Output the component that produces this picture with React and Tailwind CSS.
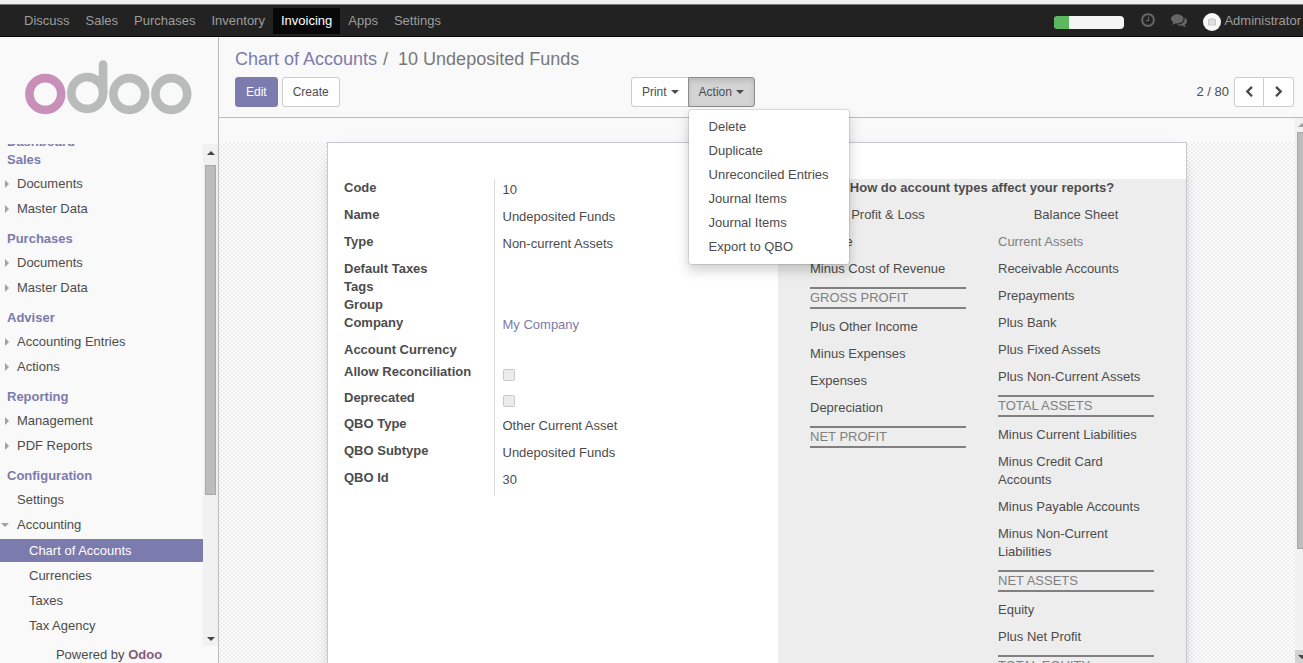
const NAV = ["Discuss", "Sales", "Purchases", "Inventory", "Invoicing", "Apps", "Settings"];

const SECTIONS = [
  { title: "Sales", items: ["Documents", "Master Data"] },
  { title: "Purchases", items: ["Documents", "Master Data"] },
  { title: "Adviser", items: ["Accounting Entries", "Actions"] },
  { title: "Reporting", items: ["Management", "PDF Reports"] },
];

const ACCOUNTING = ["Chart of Accounts", "Currencies", "Taxes", "Tax Agency"];

const ACTIONS = ["Delete", "Duplicate", "Unreconciled Entries", "Journal Items", "Journal Items", "Export to QBO"];

const FIELDS = [
  { label: "Code", value: "10", height: "h-[27px]" },
  { label: "Name", value: "Undeposited Funds", height: "h-[27px]" },
  { label: "Type", value: "Non-current Assets", height: "h-[27px]" },
  { label: "Default Taxes", height: "h-[18px]" },
  { label: "Tags", height: "h-[18px]" },
  { label: "Group", height: "h-[18px]" },
  { label: "Company", value: "My Company", link: true, height: "h-[27px]" },
  { label: "Account Currency", height: "h-[22px]" },
  { label: "Allow Reconciliation", check: "reconcile", height: "h-[26px]" },
  { label: "Deprecated", check: "deprecated", height: "h-[26px]" },
  { label: "QBO Type", value: "Other Current Asset", height: "h-[27px]" },
  { label: "QBO Subtype", value: "Undeposited Funds", height: "h-[27px]" },
  { label: "QBO Id", value: "30", height: "h-[27px]" },
];

const PROFIT = [
  { text: "Income" },
  { text: "Minus Cost of Revenue" },
  { text: "GROSS PROFIT", total: true },
  { text: "Plus Other Income" },
  { text: "Minus Expenses" },
  { text: "Expenses" },
  { text: "Depreciation" },
  { text: "NET PROFIT", total: true },
];

const BALANCE = [
  { text: "Current Assets", muted: true },
  { text: "Receivable Accounts" },
  { text: "Prepayments" },
  { text: "Plus Bank" },
  { text: "Plus Fixed Assets" },
  { text: "Plus Non-Current Assets" },
  { text: "TOTAL ASSETS", total: true },
  { text: "Minus Current Liabilities" },
  { text: "Minus Credit Card Accounts" },
  { text: "Minus Payable Accounts" },
  { text: "Minus Non-Current Liabilities" },
  { text: "NET ASSETS", total: true },
  { text: "Equity" },
  { text: "Plus Net Profit" },
  { text: "TOTAL EQUITY", total: true },
];

function Glyph({ d, className }) {
  return (
    <svg viewBox="0 0 1792 1792" className={className} fill="currentColor" aria-hidden="true">
      <path d={d} />
    </svg>
  );
}

const CLOCK =
  "M1024 544v448q0 14-9 23t-23 9h-320q-14 0-23-9t-9-23v-64q0-14 9-23t23-9h224v-352q0-14 9-23t23-9h64q14 0 23 9t9 23zm416 352q0-148-73-273t-198-198-273-73-273 73-198 198-73 273 73 273 198 198 273 73 273-73 198-198 73-273zm224 0q0 209-103 385.5t-279.5 279.5-385.5 103-385.5-103-279.5-279.5-103-385.5 103-385.5 279.5-279.5 385.5-103 385.5 103 279.5 279.5 103 385.5z";
const COMMENTS =
  "M1408 768q0 139-94 257t-256.5 186.5-353.5 68.5q-86 0-176-16-124 88-278 128-36 9-86 16h-3q-11 0-20.5-8t-11.5-21q-1-3-1-6.5t.5-6.5 2-6l2.5-5 3.5-5.5 4-5 4.5-5 4-4.5q5-6 23-25t26-29.5 22.5-29 25-38.5 20.5-44q-124-72-195-177t-71-224q0-139 94-257t256.5-186.5 353.5-68.5 353.5 68.5 256.5 186.5 94 257zm384 256q0 120-71 224.5t-195 176.5q10 24 20.5 44t25 38.5 22.5 29 26 29.5 23 25q1 1 4 4.5t4.5 5 4 5 3.5 5.5l2.5 5 2 6 .5 6.5-1 6.5q-3 14-13 22t-22 7q-50-7-86-16-154-40-278-128-90 16-176 16-271 0-472-132 58 4 88 4 161 0 309-45t264-129q125-92 192-212t67-254q0-77-23-152 129 71 204 178t75 230z";
const CHEVRON_LEFT =
  "M1427 301l-531 531 531 531q19 19 19 45t-19 45l-166 166q-19 19-45 19t-45-19l-742-742q-19-19-19-45t19-45l742-742q19-19 45-19t45 19l166 166q19 19 19 45t-19 45z";
const CHEVRON_RIGHT =
  "M1363 877l-742 742q-19 19-45 19t-45-19l-166-166q-19-19-19-45t19-45l531-531-531-531q-19-19-19-45t19-45l166-166q19-19 45-19t45 19l742 742q19 19 19 45t-19 45z";

function Logo() {
  return (
    <svg width="168" height="55" viewBox="0 0 168 55" fill="none" strokeWidth="8.6" role="img" aria-label="Odoo">
      <circle cx="21.3" cy="34" r="15.9" stroke="#c88fb9" />
      <g stroke="#b9bbba">
        <circle cx="63.2" cy="33" r="15.9" />
        <path d="M79.1 33V4.5" strokeLinecap="round" />
        <circle cx="105.3" cy="34" r="15.9" />
        <circle cx="147.3" cy="34" r="15.9" />
      </g>
    </svg>
  );
}

function Caret({ className = "h-1 w-2" }) {
  return (
    <svg viewBox="0 0 8 4" className={className} fill="currentColor" aria-hidden="true">
      <path d="M0 0h8L4 4z" />
    </svg>
  );
}

function TopBar() {
  return (
    <header className="border-t-4 border-[#f0efee] bg-[#222]">
      <div className="flex h-[33px] items-center justify-between border-b border-t border-b-[#080808] border-t-[#777]">
        <nav className="flex pl-4">
          {NAV.map((name) => (
            <a
              key={name}
              href="#"
              className={
                name === "Invoicing"
                  ? "bg-[#080808] px-2 py-1 leading-[18px] text-white"
                  : "px-2 py-1 leading-[18px] text-[#9d9d9d]"
              }
            >
              {name}
            </a>
          ))}
        </nav>
        <div className="flex items-center pr-[2px] text-[#9d9d9d]">
          <div className="mr-4 mt-1 h-[13px] w-[70px] overflow-hidden rounded bg-[#f5f5f5]">
            <div className="h-full w-[15px] bg-[#5cb85c]" />
          </div>
          <button type="button" aria-label="Activities" className="mb-[2px] mr-[15px] text-[#666]">
            <Glyph d={CLOCK} className="size-4" />
          </button>
          <button type="button" aria-label="Conversations" className="mb-[2px] mr-4 text-[#666]">
            <Glyph d={COMMENTS} className="size-4" />
          </button>
          <a href="#" className="flex items-center gap-[3px]">
            <svg viewBox="0 0 18 18" className="mt-[2px] size-[18px]" aria-hidden="true">
              <circle cx="9" cy="9" r="9" fill="#f8f8f8" />
              <path d="M5 6.2h2l.8-.9h2.6l.8.9H13v6.3H5z" fill="#ccc" />
              <circle cx="9" cy="9.3" r="2" fill="#d8d8d8" stroke="#f0f0f0" strokeWidth=".9" />
            </svg>
            Administrator
          </a>
        </div>
      </div>
    </header>
  );
}

function MenuItem({ children, marker }) {
  return (
    <li>
      <a href="#" className="flex h-[23px] items-center pl-[5px]">
        <span className="flex w-3 text-[#a0a0a0]">
          {marker === "closed" && (
            <svg viewBox="0 0 4 8" className="h-2 w-1" fill="currentColor" aria-hidden="true">
              <path d="M0 0l4 4-4 4z" />
            </svg>
          )}
          {marker === "open" && <Caret className="-ml-1 h-1 w-2" />}
        </span>
        {children}
      </a>
    </li>
  );
}

function SectionTitle({ children }) {
  return <h2 className="pl-[7px] font-bold leading-[18px] text-[#7c7bad]">{children}</h2>;
}

function Sidebar() {
  return (
    <aside className="flex w-[219px] shrink-0 flex-col border-r border-[#bbb]">
      <a href="#" className="flex h-[107px] shrink-0 justify-center pr-[2px] pt-[23px]">
        <Logo />
      </a>
      <div className="flex min-h-0 flex-1">
        <div className="min-w-0 flex-1 overflow-hidden">
          <div className="-mt-[11px]">
            <SectionTitle>Dashboard</SectionTitle>
            {SECTIONS.map((section) => (
              <section key={section.title} className="mb-[10px]">
                <SectionTitle>{section.title}</SectionTitle>
                <ul className="mt-[3px] flex flex-col gap-[2px]">
                  {section.items.map((item) => (
                    <MenuItem key={item} marker="closed">
                      {item}
                    </MenuItem>
                  ))}
                </ul>
              </section>
            ))}
            <section>
              <SectionTitle>Configuration</SectionTitle>
              <ul className="mt-[3px] flex flex-col gap-[2px]">
                <MenuItem>Settings</MenuItem>
                <MenuItem marker="open">Accounting</MenuItem>
              </ul>
              <ul className="mt-[3px] flex flex-col gap-[2px]">
                {ACCOUNTING.map((item, index) => (
                  <li key={item}>
                    <a
                      href="#"
                      className={
                        index === 0
                          ? "flex h-[23px] items-center bg-[#7c7bad] pl-[29px] text-white"
                          : "flex h-[23px] items-center pl-[29px]"
                      }
                    >
                      {item}
                    </a>
                  </li>
                ))}
              </ul>
            </section>
          </div>
        </div>
        <div className="flex w-[15px] flex-col items-center bg-[#f1f1f1] text-[#444]">
          <div className="flex h-[21px] items-center pb-1">
            <Caret className="h-1 w-2 rotate-180" />
          </div>
          <div className="h-[330px] w-[11px] border border-[#a8a8a8] bg-[#bcbcbc]" />
          <div className="mt-auto flex h-[14px] items-center">
            <Caret />
          </div>
        </div>
      </div>
      <p className="h-[17px] text-center leading-[18px]">
        Powered by <a href="#" className="font-bold text-[#875a7b]">Odoo</a>
      </p>
    </aside>
  );
}

function ControlPanel() {
  return (
    <div className="border-b border-[#bbb] pb-[10px]">
      <h1 className="flex gap-[6px] pl-4 pt-[9px] text-[18px] leading-[26px]">
        <a href="#" className="text-[#7c7bad]">
          Chart of Accounts
        </a>
        <span className="whitespace-pre text-[#777]">/  10 Undeposited Funds</span>
      </h1>
      <div className="mt-[5px] flex text-[12px]">
        <div className="flex w-[38%] gap-1 pl-4">
          <button type="button" className="h-[30px] rounded-[3px] border border-[#7c7bad] bg-[#7c7bad] px-[10px] text-white">
            Edit
          </button>
          <button type="button" className="h-[30px] rounded-[3px] border border-[#ccc] bg-white px-[10px]">
            Create
          </button>
        </div>
        <div className="flex flex-1">
          <button
            type="button"
            className="flex h-[30px] items-center gap-1 rounded-l-[3px] border border-[#ccc] bg-white px-[10px]"
          >
            Print <Caret />
          </button>
          <div className="relative -ml-[2px]">
            <button
              type="button"
              aria-expanded="true"
              className="flex h-[30px] items-center gap-1 rounded-r-[3px] border border-[#8c8c8c] bg-[#d4d4d4] px-[10px] shadow-[inset_0_3px_5px_rgba(0,0,0,0.125)]"
            >
              Action <Caret />
            </button>
            <ul className="absolute left-0 top-8 z-10 whitespace-nowrap rounded border border-black/10 bg-white bg-clip-padding py-[5px] text-[13px] shadow-[0_6px_12px_rgba(0,0,0,0.175)]">
              {ACTIONS.map((item, index) => (
                <li key={index}>
                  <a href="#" className="block px-5 leading-6">
                    {item}
                  </a>
                </li>
              ))}
            </ul>
          </div>
        </div>
        <div className="flex items-center pr-[9px]">
          <span className="pr-[5px] text-[13px]">2 / 80</span>
          <button
            type="button"
            aria-label="Previous"
            className="flex h-[30px] w-[30px] items-center justify-center rounded-l-[3px] border border-[#ccc] bg-white"
          >
            <Glyph d={CHEVRON_LEFT} className="size-3" />
          </button>
          <button
            type="button"
            aria-label="Next"
            className="flex h-[30px] w-[30px] items-center justify-center rounded-r-[3px] border border-l-0 border-[#ccc] bg-white"
          >
            <Glyph d={CHEVRON_RIGHT} className="size-3" />
          </button>
        </div>
      </div>
    </div>
  );
}

function FieldValue({ field }) {
  if (field.check) {
    return (
      <input
        id={field.check}
        type="checkbox"
        disabled
        className="mt-[6px] block size-3 appearance-none rounded-[2px] border border-[#c8c8c8] bg-[#ececec]"
      />
    );
  }
  if (field.link) {
    return (
      <a href="#" className="block pt-[2px] text-[#7c7bad]">
        {field.value}
      </a>
    );
  }
  return field.value ? <span className="block pt-[2px]">{field.value}</span> : null;
}

function ReportColumn({ title, rows }) {
  return (
    <div className="flex w-[188px] flex-col gap-[9px] pl-8">
      <h3 className="text-center">{title}</h3>
      <ul className="flex flex-col gap-[9px]">
        {rows.map((row) => (
          <li
            key={row.text}
            className={row.total ? "border-y-2 border-[#808080] text-[#808080]" : row.muted ? "text-[#808080]" : ""}
          >
            {row.text}
          </li>
        ))}
      </ul>
    </div>
  );
}

function Sheet() {
  return (
    <div className="mx-auto flex min-h-[800px] max-w-[860px] items-start border border-[#c8c8d3] bg-white pl-4 pt-9 leading-[18px] shadow-[0_5px_20px_-15px_black]">
      <table className="w-[434px] border-collapse text-left">
        <tbody>
          {FIELDS.map((field) => (
            <tr key={field.label}>
              <th scope="row" className={`${field.height} w-[150px] p-0 align-top font-bold`}>
                {field.check ? <label htmlFor={field.check}>{field.label}</label> : field.label}
              </th>
              <td className="border-l border-[#ddd] p-0 pl-2 align-top">
                <FieldValue field={field} />
              </td>
            </tr>
          ))}
        </tbody>
      </table>
      <section className="flex-1 self-stretch bg-[#ededed]">
        <h2 className="mb-[9px] text-center font-bold">How do account types affect your reports?</h2>
        <div className="flex">
          <ReportColumn title="Profit & Loss" rows={PROFIT} />
          <ReportColumn title="Balance Sheet" rows={BALANCE} />
        </div>
      </section>
    </div>
  );
}

export default function App() {
  return (
    <div className="flex h-screen flex-col overflow-hidden bg-[#f9f9f9] font-['Liberation_Sans',Arial,sans-serif] text-[13px] text-[#4c4c4c]">
      <TopBar />
      <div className="flex min-h-0 flex-1">
        <Sidebar />
        <main className="flex min-w-0 flex-1 flex-col">
          <ControlPanel />
          <div className="flex min-h-0 flex-1">
            <div className="min-w-0 flex-1 overflow-hidden pt-6">
              <div className="bg-[#fdfdfd] bg-[conic-gradient(#eeeeee_25%,transparent_0_50%,#eeeeee_0_75%,transparent_0)] bg-[length:4px_4px]">
                <Sheet />
              </div>
            </div>
            <div className="flex w-2 flex-col items-start overflow-hidden bg-[#f1f1f1] text-[#a3a3a3]">
              <div className="flex h-[14px] items-center pl-[3px]">
                <Caret className="h-1 w-2 shrink-0 rotate-180" />
              </div>
              <div className="ml-[2px] h-[417px] w-[11px] border border-[#a8a8a8] bg-[#bcbcbc]" />
              <div className="mt-auto flex h-[13px] w-full items-center bg-[#d2d2d2] pl-[3px] text-[#444]">
                <Caret className="h-1 w-2 shrink-0" />
              </div>
            </div>
          </div>
        </main>
      </div>
    </div>
  );
}
